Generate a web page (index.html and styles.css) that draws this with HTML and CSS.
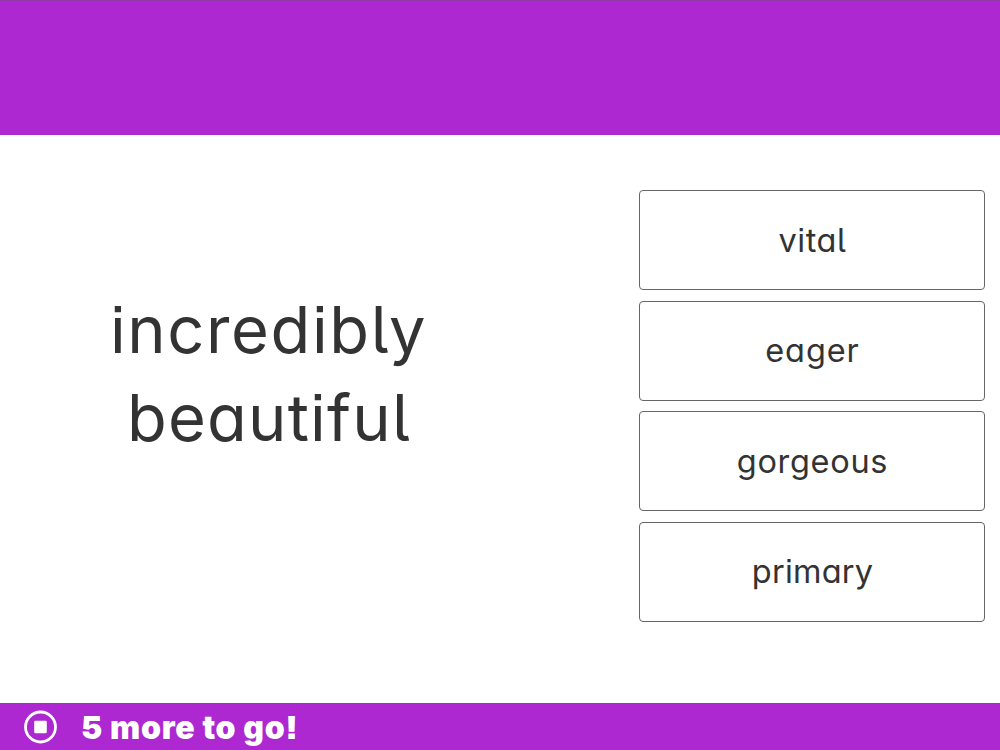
FILE: index.html
```html
<!DOCTYPE html>
<html lang="en">
<head>
    <meta charset="UTF-8">
    <title>Vocabulary</title>
    <link rel="stylesheet" href="styles.css">
</head>
<body>
    <div class="container">
        <header class="top-bar"></header>
        <main class="quiz">
            <div class="prompt">
                <span class="line line-1">incredibly</span>
                <span class="line line-2">beautiful</span>
            </div>
            <div class="answers">
                <button class="answer"><span class="vital">vital</span></button>
                <button class="answer"><span class="eager">eager</span></button>
                <button class="answer"><span class="gorgeous">gorgeous</span></button>
                <button class="answer"><span class="primary">primary</span></button>
            </div>
        </main>
        <footer class="bottom-bar">
            <svg class="stop-icon" viewBox="0 0 34 34">
                <circle cx="17.5" cy="17" r="15" fill="none" stroke="#fff" stroke-width="2.8"/>
                <rect x="11.2" y="10.8" width="12.6" height="12.4" rx="1.2" fill="#fff"/>
            </svg>
            <span class="remaining">5 more to go!</span>
        </footer>
    </div>
</body>
</html>
```
FILE: styles.css
```css
body {
    margin: 0;
    font-family: Inter, Lato, sans-serif;
    font-feature-settings: "cv11", "cv05", "ss07";
    color: #333;
    background-color: #fff;
    overflow: hidden;
}

.container {
    height: 100vh;
    display: flex;
    flex-direction: column;
}

.top-bar {
    height: 134px;
    background-color: #ad28d0;
    border-top: 1px solid #8f3aa8;
}

.quiz {
    flex: 1;
    display: flex;
    justify-content: space-between;
    padding-right: 15px;
}

.prompt {
    width: 537px;
    padding-top: 151px;
    text-align: center;
    font-size: 65px;
    line-height: 88px;
}

.line {
    display: block;
}

.line-1 {
    letter-spacing: 1.6px;
}

.line-2 {
    letter-spacing: 1.2px;
    padding-left: 1px;
}

.answers {
    width: 346px;
    padding-top: 55px;
    display: flex;
    flex-direction: column;
    gap: 10.5px;
}

.answer {
    height: 100px;
    padding: 0 0 0 1px;
    border: 1px solid #666;
    border-radius: 4px;
    background-color: #fff;
    color: #333;
    font-family: inherit;
    font-feature-settings: inherit;
    font-size: 32.5px;
}

.vital {
    letter-spacing: 0.5px;
}

.eager {
    letter-spacing: 0.9px;
}

.gorgeous {
    letter-spacing: 0.7px;
}

.primary {
    letter-spacing: 0.2px;
}

.bottom-bar {
    height: 47px;
    display: flex;
    align-items: center;
    background-color: #ad28d0;
    color: #fff;
}

.stop-icon {
    width: 34px;
    height: 34px;
    margin: 1px 24px 0 23px;
}

.remaining {
    padding-top: 2px;
    font-size: 32px;
    font-weight: 900;
    letter-spacing: 0.7px;
}
```
